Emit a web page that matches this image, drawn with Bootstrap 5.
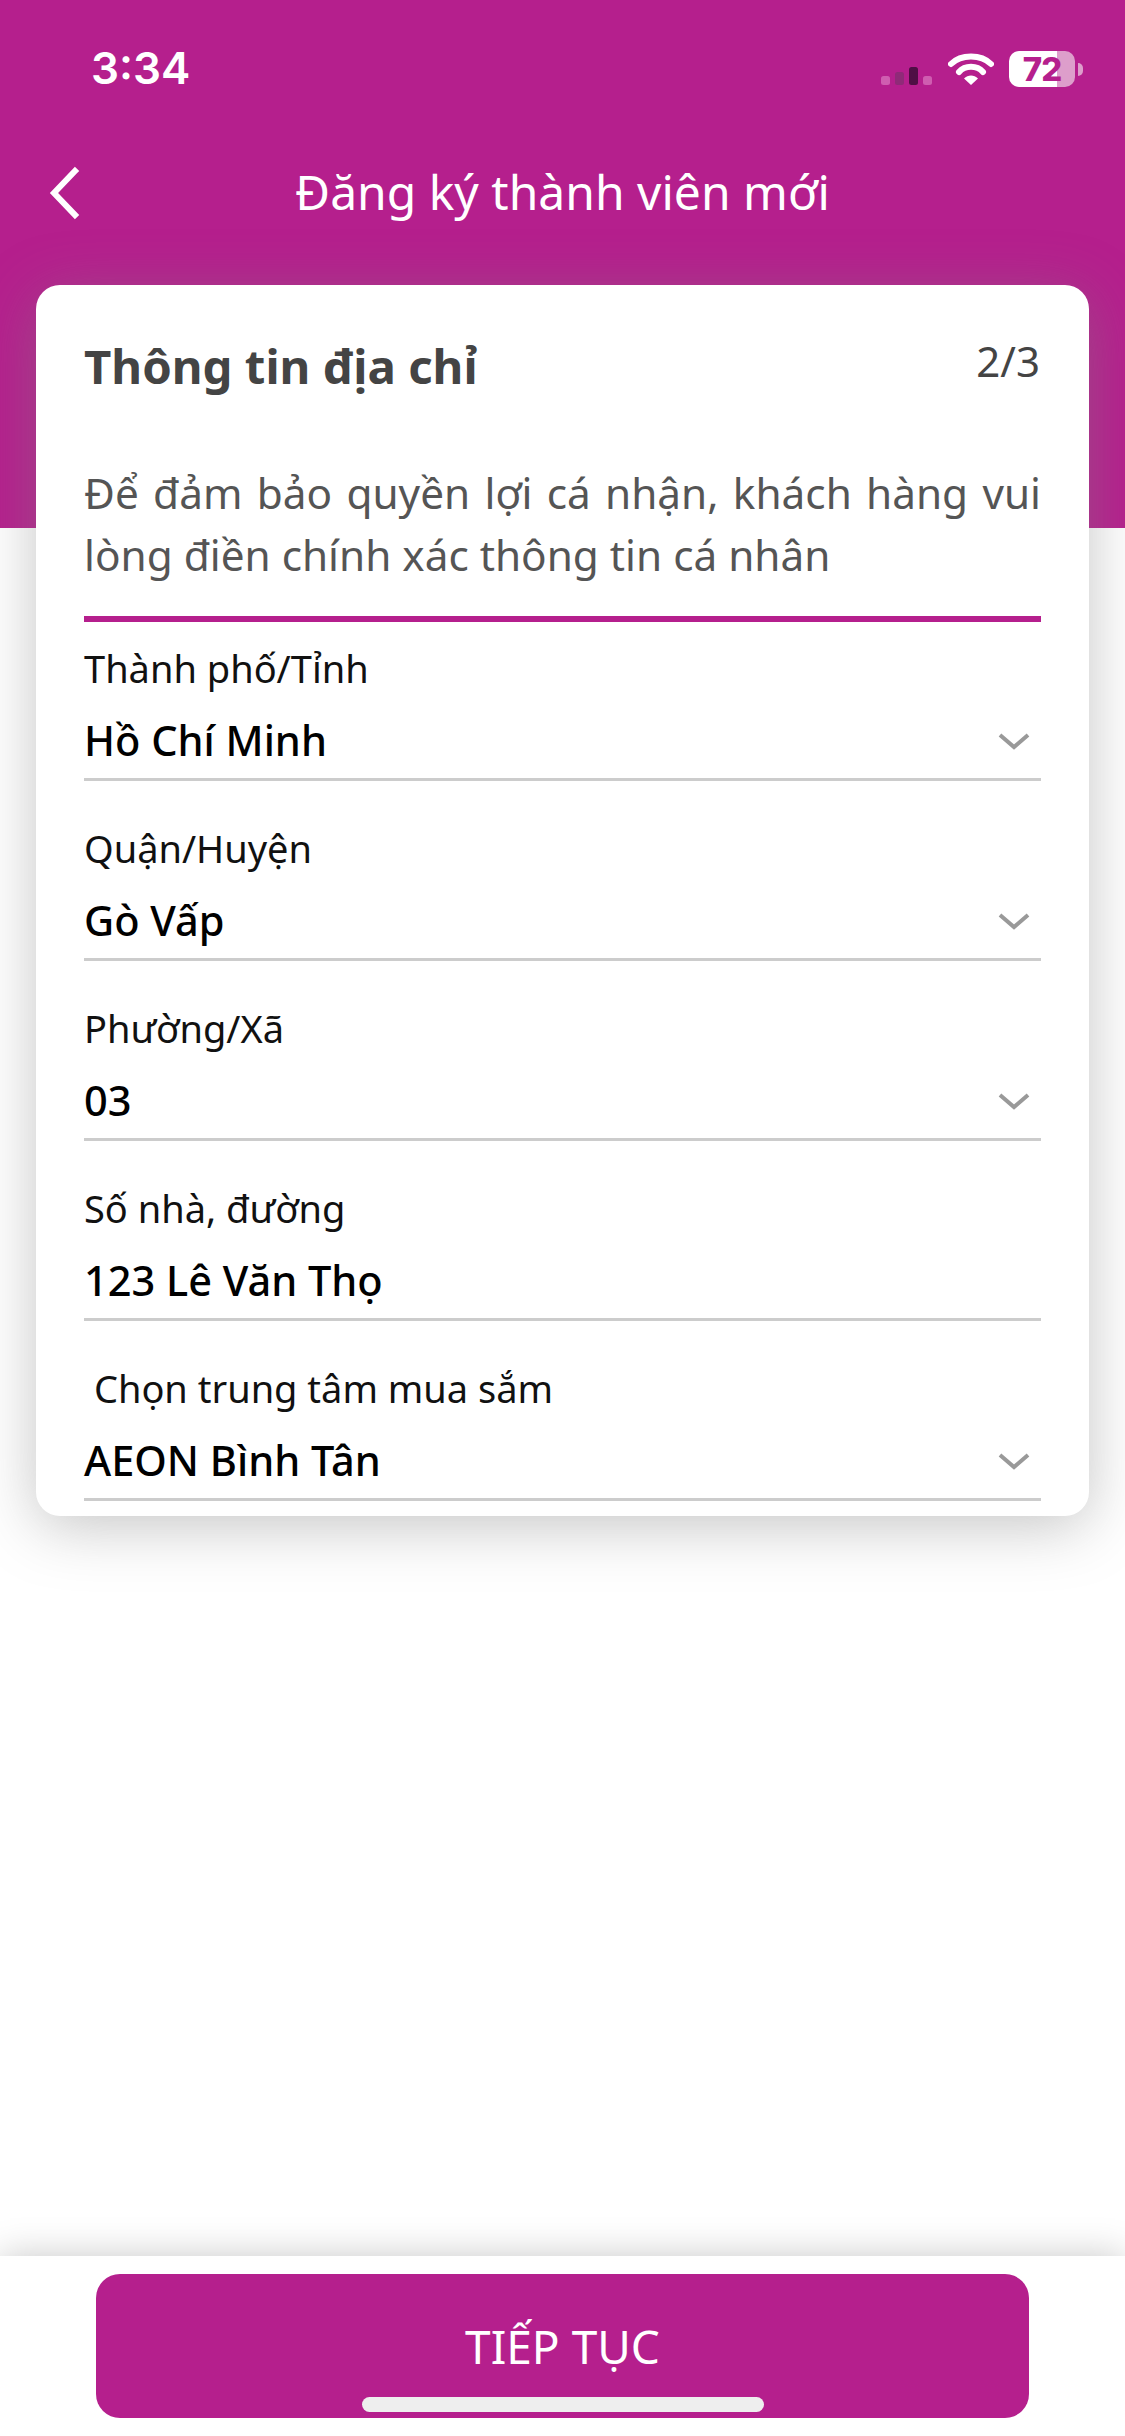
<!DOCTYPE html>
<html lang="vi">
<head>
<meta charset="utf-8">
<title>Đăng ký thành viên mới</title>
<link href="https://cdn.jsdelivr.net/npm/bootstrap@5.3.0/dist/css/bootstrap.min.css" rel="stylesheet">
<style>
html,body{margin:0;background:#fff}
body{font-family:"Noto Sans","Liberation Sans",sans-serif;width:1125px;height:2436px;overflow:hidden}
.screen{width:1125px;height:2436px}
.hero{background:#b51f8d;height:528px;color:#fff;flex:none}
.statusrow{height:136px;padding:0 42px 0 91px}
.clock{font-family:Inter,"Liberation Sans",sans-serif;font-weight:600;font-size:44px;line-height:1;letter-spacing:0}
.statusicons{gap:15px;margin-top:2px}
.sigicon,.wifiicon{margin-bottom:2px}
.batt{width:66px;height:36px;border-radius:10px;background:linear-gradient(90deg,#fff 0,#fff 48px,#dd9ecb 48px,#dd9ecb 66px);color:#b51f8d;font-family:Inter,"Liberation Sans",sans-serif;font-weight:800;font-size:33px;line-height:36px;text-align:center;letter-spacing:-1px}
.battnub{width:5px;height:13px;background:#dd9ecb;border-radius:0 6px 6px 0;margin-left:3px}
.navrow{height:114px}
.navtitle{font-size:48px;line-height:60px;font-weight:400;margin-top:-2px}
.backlink{left:48px;top:50%;transform:translateY(-50%);line-height:0}
.sheet{margin:-243px 36px 0;border:0;border-radius:24px;background:#fff;box-shadow:0 10px 60px rgba(128,128,128,.46);padding:51px 48px 15px;flex:none}
.sheethead{height:60px}
.sheettitle{font-size:47.400px;line-height:60px;font-weight:700;color:#444;margin:0}
.stepcount{font-size:42px;line-height:50px;color:#444;margin:-11px 1px 0 0}
.intro{font-size:42.300px;line-height:62px;color:#555;text-align:justify;margin:66px 0 30px}
.introline{height:6px;background:#b51f8d}
.fieldstack{gap:21px}
.fieldbox{padding:16px 0 5px;border-bottom:3px solid #ccc}
.fieldlabel{font-size:38px;line-height:60px;color:#111;white-space:pre}
.fieldvalue{font-size:41.500px;line-height:66px;color:#000;margin-top:9px;font-weight:500}
.chev{margin:2px 11px 0 0}
.footbar{height:180px;background:#fff;box-shadow:0 0 36px rgba(0,0,0,.22);padding:18px 96px;margin-top:auto;flex:none}
.gobtn{width:933px;height:144px;background:#b51f8d;border:0;border-radius:24px;color:#fff;font-size:46px;padding:0}
.homebar{left:362px;bottom:24px;width:402px;height:15px;background:#eee;border-radius:8px}
</style>
</head>
<body>
<div class="screen d-flex flex-column position-relative">
  <header class="hero">
    <div class="statusrow d-flex justify-content-between align-items-center">
      <span class="clock">3:34</span>
      <div class="statusicons d-flex align-items-end">
        <svg class="sigicon" width="52" height="18" viewBox="0 0 52 18"><rect x="0" y="9" width="9" height="9" rx="2.500" fill="#cf5db0"/><rect x="14" y="5" width="9" height="13" rx="2.500" fill="#8f2a78"/><rect x="28" y="0" width="9" height="18" rx="2.500" fill="#4f0f45"/><rect x="42" y="9" width="9" height="9" rx="2.500" fill="#cf5db0"/></svg>
        <svg class="wifiicon" width="46" height="34" viewBox="0 0 46 34"><path d="M3 13C13 3 33 3 43 13" fill="none" stroke="#fff" stroke-width="6" stroke-linecap="round"/><path d="M11 21C17 14 29 14 35 21" fill="none" stroke="#fff" stroke-width="6" stroke-linecap="round"/><path d="M16 27.500C20 23.500 26 23.500 30 27.500L23 34Z" fill="#fff"/></svg>
        <div class="d-flex align-items-center">
          <div class="batt">72</div>
          <div class="battnub"></div>
        </div>
      </div>
    </div>
    <div class="navrow position-relative d-flex align-items-center justify-content-center">
      <a class="backlink position-absolute" href="#" aria-label="Quay lại">
        <svg width="36" height="56" viewBox="0 0 36 56"><path d="M27 6L6 28L27 50" fill="none" stroke="#fff" stroke-width="6" stroke-linecap="square"/></svg>
      </a>
      <div class="navtitle">Đăng ký thành viên mới</div>
    </div>
  </header>

  <main class="card sheet">
    <div class="sheethead d-flex justify-content-between align-items-center">
      <h1 class="sheettitle">Thông tin địa chỉ</h1>
      <span class="stepcount">2/3</span>
    </div>
    <p class="intro">Để đảm bảo quyền lợi cá nhận, khách hàng vui lòng điền chính xác thông tin cá nhân</p>
    <div class="introline"></div>
    <div class="fieldstack d-flex flex-column">
      <div class="fieldbox">
        <div class="fieldlabel">Thành phố/Tỉnh</div>
        <div class="fieldvalue d-flex justify-content-between align-items-center"><span>Hồ Chí Minh</span>
          <svg class="chev" width="32" height="18" viewBox="0 0 32 18"><path d="M2 3L16 15L30 3" fill="none" stroke="#999" stroke-width="4"/></svg></div>
      </div>
      <div class="fieldbox">
        <div class="fieldlabel">Quận/Huyện</div>
        <div class="fieldvalue d-flex justify-content-between align-items-center"><span>Gò Vấp</span>
          <svg class="chev" width="32" height="18" viewBox="0 0 32 18"><path d="M2 3L16 15L30 3" fill="none" stroke="#999" stroke-width="4"/></svg></div>
      </div>
      <div class="fieldbox">
        <div class="fieldlabel">Phường/Xã</div>
        <div class="fieldvalue d-flex justify-content-between align-items-center"><span>03</span>
          <svg class="chev" width="32" height="18" viewBox="0 0 32 18"><path d="M2 3L16 15L30 3" fill="none" stroke="#999" stroke-width="4"/></svg></div>
      </div>
      <div class="fieldbox">
        <div class="fieldlabel">Số nhà, đường</div>
        <div class="fieldvalue"><span>123 Lê Văn Thọ</span></div>
      </div>
      <div class="fieldbox">
        <div class="fieldlabel"> Chọn trung tâm mua sắm</div>
        <div class="fieldvalue d-flex justify-content-between align-items-center"><span>AEON Bình Tân</span>
          <svg class="chev" width="32" height="18" viewBox="0 0 32 18"><path d="M2 3L16 15L30 3" fill="none" stroke="#999" stroke-width="4"/></svg></div>
      </div>
    </div>
  </main>

  <footer class="footbar">
    <button type="button" class="btn gobtn">TIẾP TỤC</button>
  </footer>
  <div class="homebar position-absolute"></div>
</div>
<script src="https://cdn.jsdelivr.net/npm/bootstrap@5.3.0/dist/js/bootstrap.bundle.min.js"></script>
</body>
</html>
